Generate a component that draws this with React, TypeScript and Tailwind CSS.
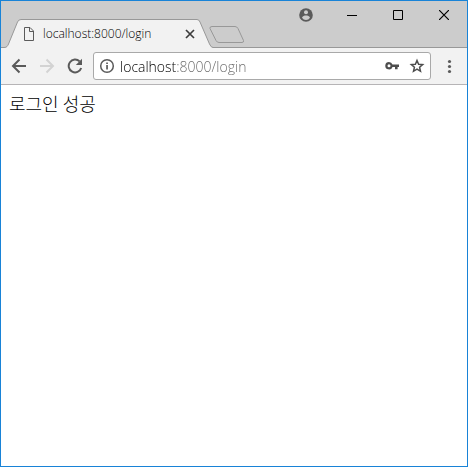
import { useState } from "react";

function Toolbar() {
  const [url, setUrl] = useState("localhost:8000/login");
  return (
    <div className="flex h-[37px] items-center border-b border-[#b6b4b6] bg-[#f2f2f2] pl-2 pr-2">
      <nav className="flex gap-2" aria-label="History">
        <button aria-label="Back" className="flex size-5 items-center justify-center text-[#5a5a5a]">
          <svg width="16" height="16" viewBox="0 0 16 16" fill="none" stroke="currentColor" strokeWidth="2">
            <path d="M15 8H2.5M8.5 1.5L2 8l6.500 6.500" />
          </svg>
        </button>
        <button aria-label="Forward" disabled className="flex size-5 items-center justify-center text-[#d3d3d3]">
          <svg width="16" height="16" viewBox="0 0 16 16" fill="none" stroke="currentColor" strokeWidth="2">
            <path d="M1 8h12.500M7.500 1.500L14 8l-6.500 6.500" />
          </svg>
        </button>
        <button aria-label="Reload" className="flex size-5 items-center justify-center text-[#5a5a5a]">
          <svg width="16" height="16" viewBox="0 0 16 16">
            <path d="M12.600 3.400A6.400 6.400 0 1 0 14.200 10" fill="none" stroke="currentColor" strokeWidth="2" />
            <path d="M15 0.800V7H8.800z" fill="currentColor" />
          </svg>
        </button>
      </nav>
      <div className="ml-2 flex h-7 min-w-0 flex-1 items-center rounded-[3px] border border-[#a9a9a9] bg-white px-[5px]">
        <button aria-label="Site information" className="flex size-4 shrink-0 items-center justify-center text-[#5a5a5a]">
          <svg width="16" height="16" viewBox="0 0 16 16">
            <circle cx="8" cy="8" r="6.300" fill="none" stroke="currentColor" strokeWidth="1.500" />
            <path d="M7.200 7h1.700v4.500H7.200zM7.200 4.400h1.700v1.700H7.200z" fill="currentColor" />
          </svg>
        </button>
        <input
          type="text"
          aria-label="Address"
          value={url}
          onChange={(e) => setUrl(e.target.value)}
          className="ml-[5px] h-6 min-w-0 flex-1 bg-linear-to-r from-black from-[56px] to-[#666666] to-[56px] bg-clip-text text-[14px] font-light text-transparent caret-black outline-none"
        />
        <button aria-label="Saved passwords" className="flex size-4 shrink-0 items-center justify-center text-[#4d4d4d]">
          <svg width="16" height="16" viewBox="0 0 16 16" fill="currentColor">
            <path
              fillRule="evenodd"
              d="M4 4a3.700 3.700 0 1 0 3.500 4.900H10v2.300h2.600V8.900H14V6.500H7.500A3.700 3.700 0 0 0 4 4zM4 6.200a1.500 1.500 0 1 1 0 3 1.500 1.500 0 0 1 0-3z"
            />
          </svg>
        </button>
        <button aria-label="Bookmark this page" className="ml-2 flex size-4 shrink-0 items-center justify-center text-[#4d4d4d]">
          <svg width="16" height="16" viewBox="0 0 16 16" fill="none" stroke="currentColor" strokeWidth="1.500">
            <path d="M8 2.500l1.600 3.700 4.100.4-3.100 2.700.9 4L8 11.200l-3.500 2.100.9-4-3.100-2.700 4.100-.4z" />
          </svg>
        </button>
      </div>
      <button aria-label="Menu" className="ml-2 flex h-6 w-5 items-center justify-center text-[#5a5a5a]">
        <svg width="16" height="16" viewBox="0 0 16 16" fill="currentColor">
          <circle cx="8.500" cy="3.500" r="1.600" />
          <circle cx="8.500" cy="8.500" r="1.600" />
          <circle cx="8.500" cy="13.500" r="1.600" />
        </svg>
      </button>
    </div>
  );
}

function TabStrip() {
  return (
    <div className="flex h-[47px] items-start bg-[linear-gradient(to_top,#989898_1px,#cccccc_1px)]">
      <div className="relative mt-[18px] h-[29px] w-[212px]">
        <svg className="absolute inset-0" width="212" height="29" viewBox="0 0 212 29" aria-hidden="true">
          <path d="M0 29V28.500H3C6 28.500 6.500 27 7.500 25L16.500 3Q17.500 .5 20 .5H196Q198 .5 199 3L208.500 25Q210 28.500 212 28.500V29z" fill="#f2f2f2" />
          <path d="M0 28.500H3C6 28.500 6.500 27 7.500 25L16.500 3Q17.500 .5 20 .5H196Q198 .5 199 3L208.500 25Q210 28.500 212 28.500" fill="none" stroke="#989898" />
        </svg>
        <div className="relative flex h-[29px] items-center pl-[22px] pr-[15px]">
          <svg width="12" height="14" viewBox="0 0 12 14" fill="none" stroke="#5a5a5a" aria-hidden="true">
            <path d="M1.500 .5H7L10.500 4V13.500H1.500zM6.500 .5V4.500H10.500" />
          </svg>
          <span className="ml-2 flex-1 text-[12px] font-light leading-4 text-black">localhost:8000/login</span>
          <button aria-label="Close tab" className="flex size-4 items-center justify-center">
            <svg width="10" height="10" viewBox="0 0 10 10" stroke="#3c3c3c" strokeWidth="1.700">
              <path d="M1 1l8 8M9 1L1 9" />
            </svg>
          </button>
        </div>
      </div>
      <button aria-label="New tab" className="-ml-1 mt-[25px]">
        <svg width="36" height="17" viewBox="0 0 36 17" fill="#cccccc" stroke="#989898">
          <path d="M3 .5H26Q28 .5 29 2.500L34.500 14.500Q35 16.500 33 16.500H10Q8 16.500 7 14.500L1 2.500Q.5 .5 3 .5z" />
        </svg>
      </button>
      <div className="ml-auto flex items-center">
        <button aria-label="Profile" className="flex h-7 w-[46px] items-center justify-center">
          <svg width="14" height="14" viewBox="0 0 14 14" aria-hidden="true">
            <circle cx="7" cy="7" r="6.800" fill="#5a5a5a" />
            <circle cx="7" cy="4.300" r="2" fill="#cccccc" />
            <path d="M3 9.800C3.300 8 5.500 7.500 7 7.500s3.700.5 4 2.300A4.800 4.800 0 0 1 7 12a4.800 4.800 0 0 1-4-2.200z" fill="#cccccc" />
          </svg>
        </button>
        <button aria-label="Minimize" className="flex h-7 w-[46px] items-center justify-center">
          <svg width="10" height="10" viewBox="0 0 10 10" shapeRendering="crispEdges">
            <path d="M0 5h10v1H0z" />
          </svg>
        </button>
        <button aria-label="Maximize" className="flex h-7 w-[46px] items-center justify-center">
          <svg width="10" height="10" viewBox="0 0 10 10" fill="none" stroke="#000">
            <path d="M.5 .5h9v9h-9z" />
          </svg>
        </button>
        <button aria-label="Close" className="flex h-7 w-[46px] items-center justify-center">
          <svg width="10" height="10" viewBox="0 0 10 10" stroke="#000" strokeWidth="1.200">
            <path d="M0 0l10 10M10 0L0 10" />
          </svg>
        </button>
      </div>
    </div>
  );
}

export default function App() {
  return (
    <div className="flex min-h-screen flex-col border border-[#1883d7] bg-white font-['Open_Sans','Noto_Sans_CJK_KR',sans-serif]">
      <TabStrip />
      <Toolbar />
      <main className="flex-1 p-2">
        <p className="font-['Noto_Sans_CJK_KR',sans-serif] text-[18px] font-light leading-5 text-black">로그인 성공</p>
      </main>
    </div>
  );
}
